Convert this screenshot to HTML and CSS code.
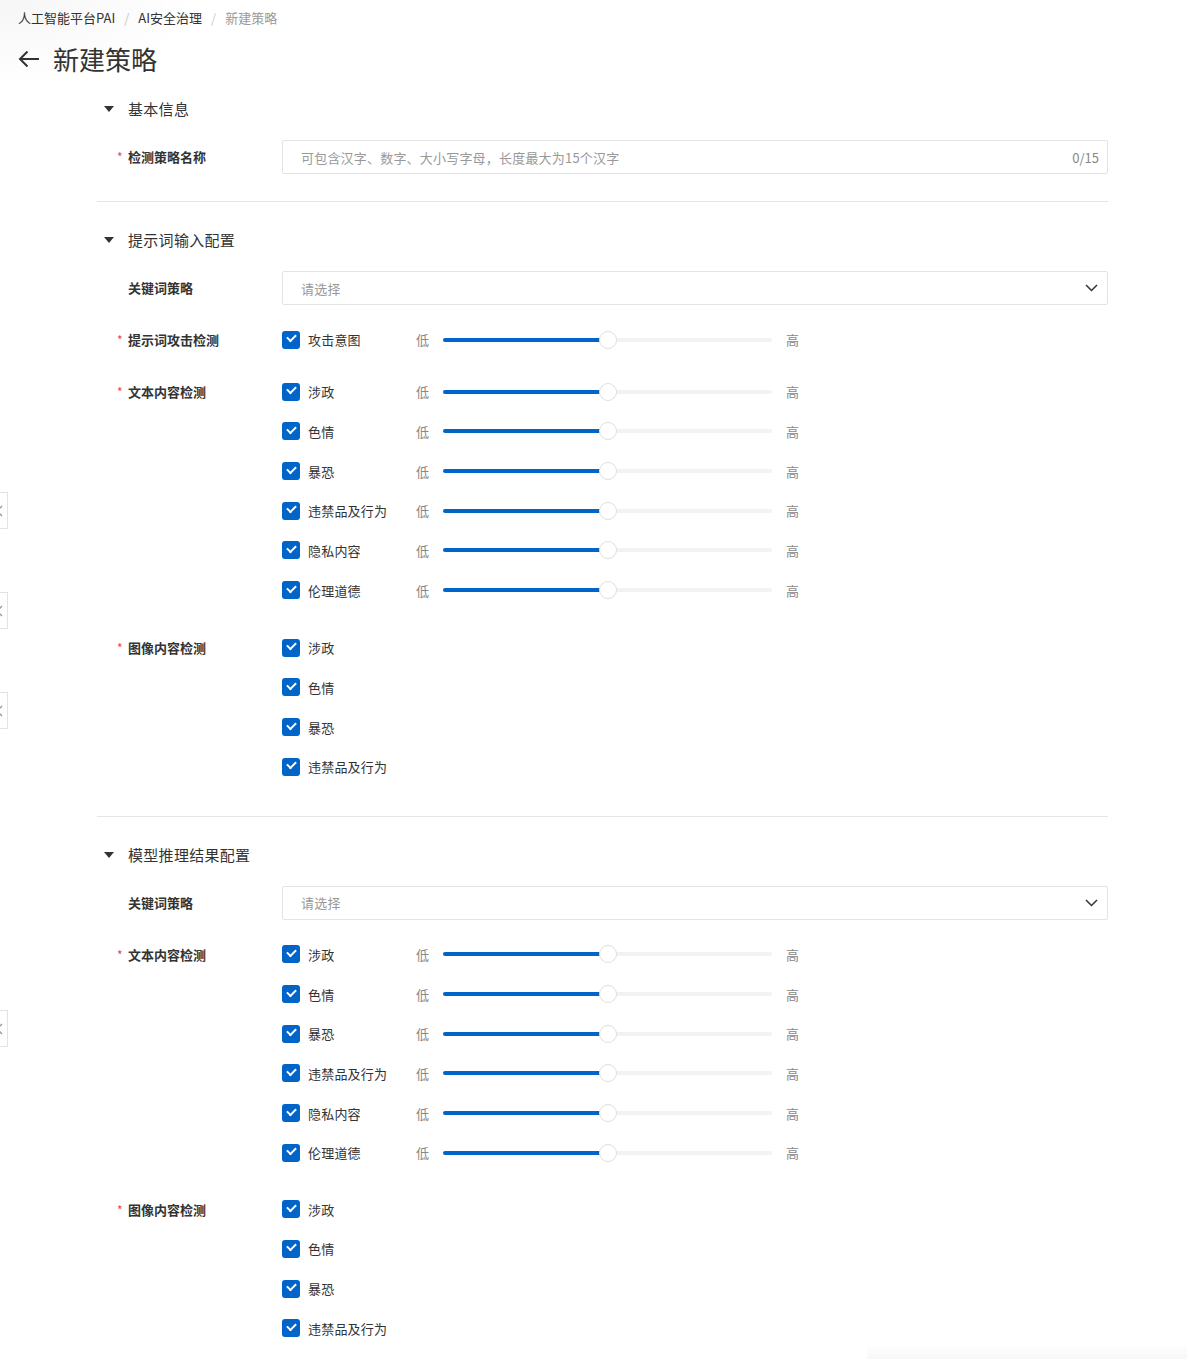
FILE: index.html
```html
<!DOCTYPE html>
<html lang="zh-CN">
<head>
<meta charset="utf-8">
<title>新建策略</title>
<link rel="stylesheet" href="styles.css">
</head>
<body>
<div class="shade-tl"></div>
<div class="shade-br"></div>
<div class="edge-tab" style="top:492px"><svg viewBox="0 0 8 12" width="8" height="12"><polyline points="6,1 1,6 6,11" fill="none" stroke="#999" stroke-width="1.3"/></svg></div>
<div class="edge-tab" style="top:592px"><svg viewBox="0 0 8 12" width="8" height="12"><polyline points="6,1 1,6 6,11" fill="none" stroke="#999" stroke-width="1.3"/></svg></div>
<div class="edge-tab" style="top:692px"><svg viewBox="0 0 8 12" width="8" height="12"><polyline points="6,1 1,6 6,11" fill="none" stroke="#999" stroke-width="1.3"/></svg></div>
<div class="edge-tab" style="top:1010px"><svg viewBox="0 0 8 12" width="8" height="12"><polyline points="6,1 1,6 6,11" fill="none" stroke="#999" stroke-width="1.3"/></svg></div>

<div class="page">
  <nav class="breadcrumb">
    <span class="crumb">人工智能平台PAI</span><span class="sep">/</span><span class="crumb">AI安全治理</span><span class="sep">/</span><span class="crumb current">新建策略</span>
  </nav>
  <h1 class="title">
    <svg class="back" viewBox="0 0 22 18" width="22" height="18"><path d="M21 9H2M9.5 1.5L2 9l7.5 7.5" fill="none" stroke="#333" stroke-width="2"/></svg>
    <span>新建策略</span>
  </h1>

  <div class="content">
    <!-- section 1 -->
    <section class="section">
      <div class="section-head"><span class="caret"></span>基本信息</div>
      <div class="form-item field-row">
        <div class="form-label required">检测策略名称</div>
        <div class="input"><span class="placeholder">可包含汉字、数字、大小写字母，长度最大为15个汉字</span><span class="counter">0/15</span></div>
      </div>
    </section>
    <div class="divider"></div>

    <!-- section 2 -->
    <section class="section">
      <div class="section-head"><span class="caret"></span>提示词输入配置</div>
      <div class="form-item field-row">
        <div class="form-label">关键词策略</div>
        <div class="input select"><span class="placeholder">请选择</span><svg class="chev" viewBox="0 0 13 8" width="13" height="8"><polyline points="1,1 6.5,6.5 12,1" fill="none" stroke="#333" stroke-width="1.5"/></svg></div>
      </div>
      <div class="form-item group g-attack">
        <div class="form-label required">提示词攻击检测</div>
        <div class="options">
          <div class="opt"><span class="cb"></span><span class="opt-text">攻击意图</span><span class="lv">低</span><span class="track"><span class="fill"></span><span class="thumb"></span></span><span class="lv hi">高</span></div>
        </div>
      </div>
      <div class="form-item group g-text">
        <div class="form-label required">文本内容检测</div>
        <div class="options">
          <div class="opt"><span class="cb"></span><span class="opt-text">涉政</span><span class="lv">低</span><span class="track"><span class="fill"></span><span class="thumb"></span></span><span class="lv hi">高</span></div>
          <div class="opt"><span class="cb"></span><span class="opt-text">色情</span><span class="lv">低</span><span class="track"><span class="fill"></span><span class="thumb"></span></span><span class="lv hi">高</span></div>
          <div class="opt"><span class="cb"></span><span class="opt-text">暴恐</span><span class="lv">低</span><span class="track"><span class="fill"></span><span class="thumb"></span></span><span class="lv hi">高</span></div>
          <div class="opt"><span class="cb"></span><span class="opt-text">违禁品及行为</span><span class="lv">低</span><span class="track"><span class="fill"></span><span class="thumb"></span></span><span class="lv hi">高</span></div>
          <div class="opt"><span class="cb"></span><span class="opt-text">隐私内容</span><span class="lv">低</span><span class="track"><span class="fill"></span><span class="thumb"></span></span><span class="lv hi">高</span></div>
          <div class="opt"><span class="cb"></span><span class="opt-text">伦理道德</span><span class="lv">低</span><span class="track"><span class="fill"></span><span class="thumb"></span></span><span class="lv hi">高</span></div>
        </div>
      </div>
      <div class="form-item group g-image">
        <div class="form-label required">图像内容检测</div>
        <div class="options">
          <div class="opt"><span class="cb"></span><span class="opt-text">涉政</span></div>
          <div class="opt"><span class="cb"></span><span class="opt-text">色情</span></div>
          <div class="opt"><span class="cb"></span><span class="opt-text">暴恐</span></div>
          <div class="opt"><span class="cb"></span><span class="opt-text">违禁品及行为</span></div>
        </div>
      </div>
    </section>
    <div class="divider d2"></div>

    <!-- section 3 -->
    <section class="section">
      <div class="section-head"><span class="caret"></span>模型推理结果配置</div>
      <div class="form-item field-row">
        <div class="form-label">关键词策略</div>
        <div class="input select"><span class="placeholder">请选择</span><svg class="chev" viewBox="0 0 13 8" width="13" height="8"><polyline points="1,1 6.5,6.5 12,1" fill="none" stroke="#333" stroke-width="1.5"/></svg></div>
      </div>
      <div class="form-item group g-text3">
        <div class="form-label required">文本内容检测</div>
        <div class="options">
          <div class="opt"><span class="cb"></span><span class="opt-text">涉政</span><span class="lv">低</span><span class="track"><span class="fill"></span><span class="thumb"></span></span><span class="lv hi">高</span></div>
          <div class="opt"><span class="cb"></span><span class="opt-text">色情</span><span class="lv">低</span><span class="track"><span class="fill"></span><span class="thumb"></span></span><span class="lv hi">高</span></div>
          <div class="opt"><span class="cb"></span><span class="opt-text">暴恐</span><span class="lv">低</span><span class="track"><span class="fill"></span><span class="thumb"></span></span><span class="lv hi">高</span></div>
          <div class="opt"><span class="cb"></span><span class="opt-text">违禁品及行为</span><span class="lv">低</span><span class="track"><span class="fill"></span><span class="thumb"></span></span><span class="lv hi">高</span></div>
          <div class="opt"><span class="cb"></span><span class="opt-text">隐私内容</span><span class="lv">低</span><span class="track"><span class="fill"></span><span class="thumb"></span></span><span class="lv hi">高</span></div>
          <div class="opt"><span class="cb"></span><span class="opt-text">伦理道德</span><span class="lv">低</span><span class="track"><span class="fill"></span><span class="thumb"></span></span><span class="lv hi">高</span></div>
        </div>
      </div>
      <div class="form-item group g-image3">
        <div class="form-label required">图像内容检测</div>
        <div class="options">
          <div class="opt"><span class="cb"></span><span class="opt-text">涉政</span></div>
          <div class="opt"><span class="cb"></span><span class="opt-text">色情</span></div>
          <div class="opt"><span class="cb"></span><span class="opt-text">暴恐</span></div>
          <div class="opt"><span class="cb"></span><span class="opt-text">违禁品及行为</span></div>
        </div>
      </div>
    </section>
  </div>
</div>
</body>
</html>
```

FILE: styles.css
```css
html, body {
  margin: 0;
  padding: 0;
  overflow: hidden;
  background: #fff;
}
body {
  font-family: "Noto Sans CJK SC", "Noto Sans", sans-serif;
  color: #333;
  position: relative;
  height: 1359px;
}

.shade-tl {
  position: absolute;
  left: 0; top: 0;
  width: 200px; height: 90px;
  background: radial-gradient(ellipse at 0 0, rgba(0,0,0,0.035), rgba(0,0,0,0) 70%);
  pointer-events: none;
}
.shade-br {
  position: absolute;
  right: 0; bottom: 0;
  width: 320px; height: 16px;
  background: linear-gradient(to bottom, rgba(0,0,0,0), rgba(0,0,0,0.03));
  pointer-events: none;
}
.edge-tab {
  position: absolute;
  left: -1px;
  width: 8px;
  height: 35px;
  border: 1px solid #e3e3e3;
  border-left: none;
  background: #fff;
  display: flex;
  align-items: center;
  overflow: hidden;
}
.edge-tab svg { margin-left: -3px; }

.page {
  padding: 9px 0 0 18px;
}

.breadcrumb {
  font-size: 13px;
  line-height: 18px;
  height: 18px;
  display: flex;
  align-items: center;
  color: #333;
}
.sep { color: #ccc; padding: 0 9px; }
.crumb.current { color: #999; }

.title {
  margin: 16px 0 0 0;
  height: 32px;
  display: flex;
  align-items: center;
  font-size: 26px;
  font-weight: 400;
  color: #333;
  line-height: 32px;
}
.title .back { margin-right: 13px; }

.content {
  margin-left: 79px;
  width: 1011px;
  margin-top: 23px;
}

.section-head {
  height: 22px;
  line-height: 22px;
  font-size: 15px;
  display: flex;
  align-items: center;
  color: #333;
  letter-spacing: 0.3px;
}
.caret {
  width: 0; height: 0;
  border-left: 5px solid transparent;
  border-right: 5px solid transparent;
  border-top: 6px solid #333;
  margin: 0 14px 0 7px;
}

.form-item {
  display: grid;
  grid-template-columns: 185px 1fr;
}
.form-label {
  font-size: 13px;
  font-weight: 700;
  color: #333;
  padding-left: 31px;
  line-height: 40px;
  white-space: nowrap;
}
.form-label.required::before {
  content: "*";
  color: #e5484d;
  font-weight: 400;
  display: inline-block;
  width: 10px;
  margin-left: -11px;
  margin-right: 1px;
  font-size: 12px;
}

.field-row { margin-top: 20px; }
.field-row .form-label { line-height: 34px; }

.input {
  height: 34px;
  box-sizing: border-box;
  border: 1px solid #e3e3e3;
  border-radius: 2px;
  display: flex;
  align-items: center;
  justify-content: space-between;
  padding: 0 8px 0 18px;
  font-size: 13px;
}
.placeholder { color: #999; letter-spacing: 0.2px; }
.counter { color: #888; }
.select { padding-right: 9px; }

.divider {
  height: 1px;
  background: #e5e5e5;
  margin: 27px 0 27px 0;
}
.d2 { margin-top: 29px; }

.g-attack { margin-top: 15px; }
.g-text { margin-top: 12px; }
.g-image { margin-top: 18px; }
.g-text3 { margin-top: 15px; }
.g-image3 { margin-top: 17px; }

.options {
  display: flex;
  flex-direction: column;
}
.opt {
  height: 39.67px;
  display: flex;
  align-items: center;
  font-size: 13px;
}
.cb {
  width: 18px;
  height: 18px;
  box-sizing: border-box;
  border-radius: 3px;
  background: #0064c8;
  position: relative;
  margin-right: 8px;
  flex: none;
}
.cb::after {
  content: "";
  position: absolute;
  left: 5px;
  top: 3.5px;
  width: 7px;
  height: 4px;
  border-left: 2px solid #fff;
  border-bottom: 2px solid #fff;
  transform: rotate(-45deg);
}
.opt-text {
  width: 108px;
  color: #333;
  letter-spacing: 0.2px;
}
.lv {
  color: #888;
  width: 13px;
  margin-right: 14px;
}
.lv.hi { margin: 0 0 0 14px; }
.track {
  position: relative;
  width: 329px;
  height: 4px;
  border-radius: 2px;
  background: #f2f2f2;
}
.fill {
  position: absolute;
  left: 0; top: 0; bottom: 0;
  width: 50%;
  background: #0064c8;
  border-radius: 2px;
}
.thumb {
  position: absolute;
  left: 50%;
  top: 50%;
  width: 18px;
  height: 18px;
  box-sizing: border-box;
  margin: -9px 0 0 -9px;
  border-radius: 50%;
  background: #fff;
  border: 1px solid #e0e0e0;
}
```
